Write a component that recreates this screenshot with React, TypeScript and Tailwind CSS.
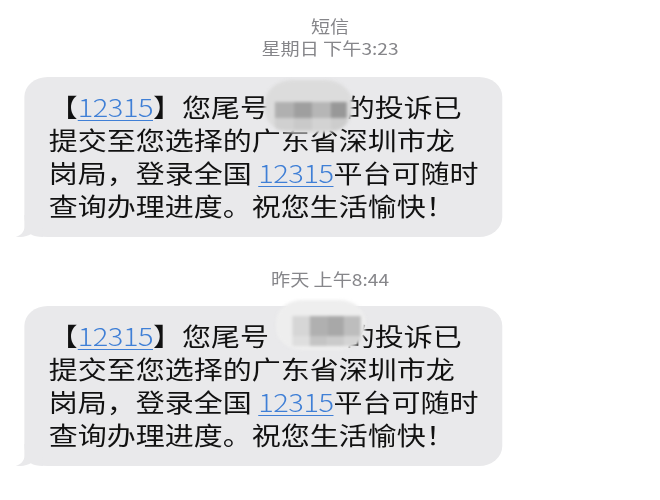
import React from "react";

const msgFont = { fontFamily: "'Noto Sans CJK SC', 'Noto Sans', sans-serif" };

function Tail() {
  return (
    <svg
      className="absolute left-[-8px] bottom-0"
      width="24"
      height="22"
      viewBox="0 0 24 22"
    >
      <path
        d="M8 0 V12 C8 16.5 5.5 20 0.5 22 C6 22.4 10.5 21.2 13.5 19.2 C16 21 19.5 22 24 22 V0 Z"
        fill="#e9e9eb"
      />
    </svg>
  );
}

function Link({ children }: { children: React.ReactNode }) {
  return (
    <span className="font-light tracking-[-0.4px] text-[#3f7fd6] underline decoration-1 underline-offset-[3px]">
      {children}
    </span>
  );
}

function Mosaic1() {
  return (
    <div className="absolute left-[207px] top-[3px] w-[76px] h-[53px] rounded-[24px] bg-[#dcdcdc] blur-[1.5px] overflow-hidden">
      <div className="mt-[22px] ml-[9px] flex">
        <div className="w-[16px] h-[16px] bg-[#b0b0b0]" />
        <div className="w-[16px] h-[16px] bg-[#9f9f9f]" />
        <div className="w-[16px] h-[16px] bg-[#b6b6b6]" />
        <div className="w-[14px] h-[16px] bg-[#989898]" />
      </div>
      <div className="ml-[9px] flex">
        <div className="w-[16px] h-[12px] bg-[#d0d0d0]" />
        <div className="w-[16px] h-[12px] bg-[#c9c9c9]" />
        <div className="w-[16px] h-[12px] bg-[#d3d3d3]" />
        <div className="w-[14px] h-[12px] bg-[#cdcdcd]" />
      </div>
    </div>
  );
}

function Mosaic2() {
  return (
    <div className="absolute left-[217px] top-[-6px] w-[77px] h-[50px] rounded-[22px] bg-[#eeeeee] blur-[1.5px] overflow-hidden">
      <div className="mt-[16px] ml-[14px] flex">
        <div className="w-[15px] h-[20px] bg-[#d6d6d6]" />
        <div className="w-[15px] h-[20px] bg-[#b0b0b0]" />
        <div className="w-[15px] h-[20px] bg-[#a8a8a8]" />
        <div className="w-[14px] h-[20px] bg-[#bdbdbd]" />
      </div>
      <div className="ml-[14px] flex">
        <div className="w-[15px] h-[10px] bg-[#dedede]" />
        <div className="w-[15px] h-[10px] bg-[#c4c4c4]" />
        <div className="w-[15px] h-[10px] bg-[#cacaca]" />
        <div className="w-[14px] h-[10px] bg-[#d4d4d4]" />
      </div>
    </div>
  );
}

function Bubble({ mosaic }: { mosaic: React.ReactNode }) {
  return (
    <div
      className="relative ml-[21px] w-[412px] rounded-[20px] bg-[#e9e9eb] pl-[21px] pt-[13px] pb-[15px] text-[25px] leading-[33px] text-[#111111]"
      style={msgFont}
    >
      <Tail />
      <div className="relative whitespace-nowrap">
        【<Link>12315</Link>】您尾号 <span className="inline-block w-[55px]" /> 的投诉已
        <br />
        提交至您选择的广东省深圳市龙
        <br />
        岗局，登录全国 <Link>12315</Link>平台可随时
        <br />
        查询办理进度。祝您生活愉快！
      </div>
      {mosaic}
    </div>
  );
}

export default function App() {
  return (
    <div className="w-[660px] h-[500px] bg-white overflow-hidden">
      <div className="w-[569px] origin-left scale-x-[1.16] flex flex-col">
        <div
          className="pt-[15px] text-center text-[16.5px] leading-[22px] text-[#86868a]"
          style={msgFont}
        >
          <div>短信</div>
          <div>星期日 下午3:23</div>
        </div>
        <div className="mt-[18px]">
          <Bubble mosaic={<Mosaic1 />} />
        </div>
        <div
          className="mt-[31px] text-center text-[16.5px] leading-[22px] text-[#86868a]"
          style={msgFont}
        >
          昨天 上午8:44
        </div>
        <div className="mt-[16px]">
          <Bubble mosaic={<Mosaic2 />} />
        </div>
      </div>
    </div>
  );
}
